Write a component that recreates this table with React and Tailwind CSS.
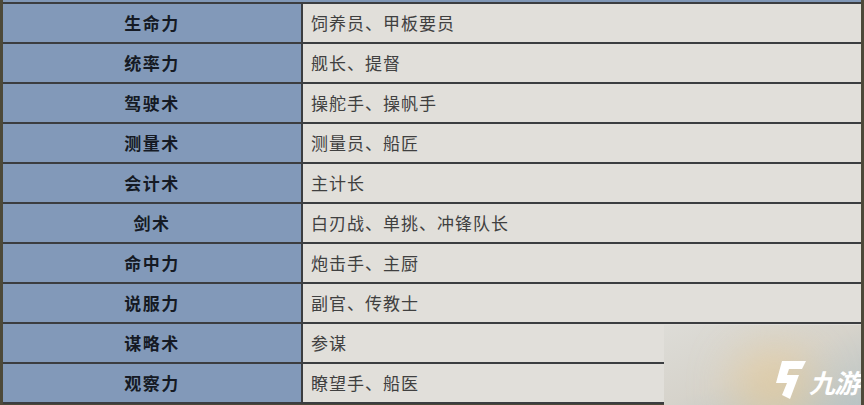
const rows = [
  ['生命力', '饲养员、甲板要员'],
  ['统率力', '舰长、提督'],
  ['驾驶术', '操舵手、操帆手'],
  ['测量术', '测量员、船匠'],
  ['会计术', '主计长'],
  ['剑术', '白刃战、单挑、冲锋队长'],
  ['命中力', '炮击手、主厨'],
  ['说服力', '副官、传教士'],
  ['谋略术', '参谋'],
  ['观察力', '瞭望手、船医'],
];

const cjk = { fontFamily: '"Noto Sans CJK SC", "Noto Sans", sans-serif' };

// site watermark over the bottom-right corner
function Watermark() {
  return (
    <div className="absolute right-[3px] bottom-0 w-[197px] h-[80px] overflow-hidden bg-gradient-to-br from-[#dddcd7] via-[#d6d3cb] to-[#b9c3c4]">
      <div className="absolute left-[70px] top-[25px] w-[80px] h-[70px] rounded-full bg-[#ecc98a] opacity-60 blur-xl" />
      <div className="relative h-full flex items-end justify-end pb-[5px] pr-[2px] gap-[2px]">
        <svg width="34" height="40" viewBox="0 0 34 40" className="shrink-0">
          <path d="M9 1 L33 1 L29 9 L16 9 L14 15 L26 15 L17 39 L9 35 L14 23 L3 23 Z" fill="#ffffff" />
        </svg>
        <span
          className="whitespace-nowrap text-[26px] font-bold italic text-white leading-none pb-[5px] tracking-[-1px]"
          style={cjk}
        >
          九游
        </span>
      </div>
    </div>
  );
}

export default function App() {
  return (
    <div className="relative w-[864px] h-[405px] overflow-hidden bg-[#4d4939] px-[3px]">
      <div className="h-[2px] bg-[#8097b6]" />
      <div className="border-t-2 border-[#3b3d40]">
        {rows.map(([skill, jobs]) => (
          <div key={skill} className="flex h-[40px] border-b-2 border-[#3b3d40]">
            <div
              className="w-[300px] shrink-0 flex items-center justify-center bg-[#8299b9] border-r-2 border-[#3b3d40] text-[17px] font-bold tracking-[1.5px] text-[#151a24]"
              style={cjk}
            >
              {skill}
            </div>
            <div
              className="flex-1 flex items-center pl-[8px] bg-[#e1dfda] text-[17px] tracking-[1px] text-[#404040]"
              style={cjk}
            >
              {jobs}
            </div>
          </div>
        ))}
      </div>
      <Watermark />
    </div>
  );
}
